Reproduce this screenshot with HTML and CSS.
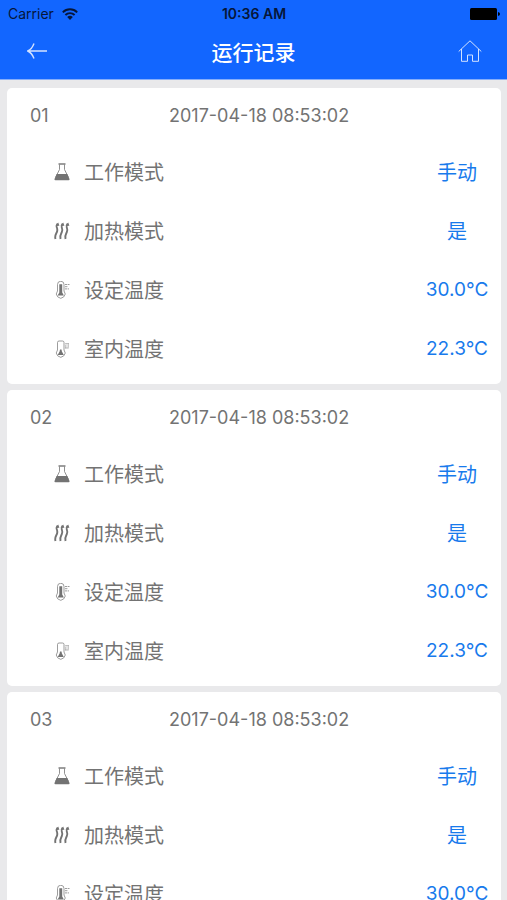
FILE: index.html
```
<!DOCTYPE html>
<html lang="zh-CN">
<head>
<meta charset="utf-8">
<meta name="viewport" content="width=device-width, initial-scale=1">
<title>运行记录</title>
<link rel="stylesheet" href="styles.css">
</head>
<body>
<svg class="symbols" aria-hidden="true">
  <symbol id="flask" viewBox="0 0 16 18">
    <path d="M4.500 1h7" stroke="currentColor" stroke-width="1.4" fill="none"/>
    <path d="M5.500 1.500v5L1.500 14.500M10.500 1.500v5l4 8" stroke="currentColor" stroke-width=".8" fill="none"/>
    <path d="M2.700 11h10.600l2.200 4.900q.4 1.400-1 1.400H1.500q-1.400 0-1-1.400z" fill="currentColor"/>
  </symbol>
  <symbol id="heat" viewBox="0 0 16 18">
    <g fill="none" stroke="currentColor" stroke-width="1.900">
      <path d="M1.500 17c-1-3 .2-4.500 1.200-6.500s.8-3.500 0-5.500q-.4-1.500 1-3.500"/>
      <path d="M6.500 17c-1-3 .2-4.500 1.200-6.500s.8-3.500 0-5.500q-.4-1.500 1-3.500"/>
      <path d="M11.500 17c-1-3 .2-4.500 1.200-6.500s.8-3.500 0-5.500q-.4-1.500 1-3.500"/>
    </g>
    <path d="M1.500 4 4.200.5l1.200 3.300zM6.500 4 9.200.5l1.200 3.300zM11.500 4 14.200.5l1.200 3.300z" fill="currentColor"/>
  </symbol>
  <symbol id="thermo-set" viewBox="0 0 16 18">
    <path d="M3.500 10V3.500a3.200 3.200 0 0 1 6.500 0V10a4.300 4.300 0 1 1-6.500 0z" fill="none" stroke="currentColor" stroke-width=".7"/>
    <path d="M5.300 3.300h2.900v8.200l1.700 3H3.600l1.700-3z" fill="currentColor"/>
    <path d="M11 3.500h4.500M11 5.700h3M11 7.900h4" stroke="currentColor" stroke-width=".7" stroke-dasharray="2 .6"/>
  </symbol>
  <symbol id="thermo-room" viewBox="0 0 16 18">
    <path d="M3.500 10V2.500q0-1.500 1.500-1.500h3.500Q10 1 10 2.500V10a4.300 4.300 0 1 1-6.500 0z" fill="none" stroke="currentColor" stroke-width=".7"/>
    <path d="M6 9.500h1.500l.4 2 1.900 3.400H3.700l1.900-3.400z" fill="currentColor"/>
    <path d="M11 3.500h4M11.500 4.500v4M13 3.500v5M14.500 3.500v4M11 8h4" stroke="currentColor" stroke-width=".4" fill="none"/>
  </symbol>
</svg>

<header class="top">
  <div class="status">
    <span class="carrier">Carrier
      <svg class="wifi" viewBox="0 0 16 12" aria-hidden="true">
        <g fill="none" stroke="currentColor" stroke-width="1.900">
          <path d="M.8 4.300a10.200 10.200 0 0 1 14.400 0"/>
          <path d="M3.400 7a6.500 6.500 0 0 1 9.200 0"/>
        </g>
        <path d="M8 12 5.200 9.100a4 4 0 0 1 5.600 0z" fill="currentColor"/>
      </svg>
    </span>
    <span class="clock">10:36 AM</span>
    <svg class="battery" viewBox="0 0 30 12" aria-hidden="true">
      <rect width="27" height="12" rx="1.500"/>
      <path d="M28 4q2 .3 2 2t-2 2z"/>
    </svg>
  </div>
  <nav class="bar">
    <button class="icon-button" type="button" aria-label="返回">
      <svg class="back" viewBox="0 0 20 18" aria-hidden="true"><path d="M20 9H1M7 1.500Q5 7 .8 9q4.200 2 6.200 7.500"/></svg>
    </button>
    <h1 class="title">运行记录</h1>
    <a class="icon-button" href="#" aria-label="首页">
      <svg class="home" viewBox="0 0 24 22" aria-hidden="true"><path d="M.7 11.500 12 .8l11.300 10.700M3.500 9v12.300h6V15h5v6.300h6V9"/></svg>
    </a>
  </nav>
</header>

<main class="records" id="records"></main>

<script src="records.js"></script>
</body>
</html>
```
FILE: styles.css
```
* {
  box-sizing: border-box;
}

body {
  margin: 0;
  height: 100vh;
  display: flex;
  flex-direction: column;
  background: #e9e9eb;
  color: #737373;
  font-family: Inter, "Noto Sans CJK SC", sans-serif;
}

.symbols {
  position: absolute;
  width: 0;
  height: 0;
}

.top {
  flex: none;
  background: #1266ff;
  border-bottom: 1px solid #86aefa;
}

.status {
  display: grid;
  grid-template-columns: 1fr auto 1fr;
  align-items: center;
  height: 27px;
  padding: 0 7px 0 8px;
  color: #06163a;
  font-size: 14px;
}

.carrier {
  display: flex;
  align-items: center;
  gap: 8px;
}

.wifi {
  width: 16px;
  height: 12px;
}

.clock {
  font-weight: 600;
}

.battery {
  justify-self: end;
  width: 30px;
  height: 12px;
  fill: #000;
}

.bar {
  display: flex;
  align-items: center;
  justify-content: space-between;
  height: 52px;
  padding: 0 15px 4px;
}

.icon-button {
  display: flex;
  align-items: center;
  justify-content: center;
  width: 44px;
  height: 44px;
  padding: 0;
  border: 0;
  background: none;
}

.back,
.home {
  fill: none;
  stroke: #d3e2ff;
}

.back {
  width: 20px;
  height: 18px;
  stroke-width: 1.4;
}

.home {
  width: 24px;
  height: 22px;
  stroke-width: 1;
}

.title {
  margin: 0;
  color: #fff;
  font-size: 21px;
  font-weight: 500;
}

.records {
  flex: 1;
  min-height: 0;
  overflow-y: auto;
  scrollbar-width: none;
  display: flex;
  flex-direction: column;
  gap: 6px;
  padding: 8px 6px 8px 7px;
}

.card {
  flex: none;
  padding-bottom: 6px;
  border-radius: 5px;
  background: #fff;
}

.card-head {
  display: grid;
  grid-template-columns: 139px 1fr;
  align-items: center;
  height: 54px;
  padding-left: 23px;
  font-size: 18px;
}

.number {
  margin: 0;
  font-size: 18px;
  font-weight: 400;
}

.fields {
  margin: 0;
}

.field {
  display: flex;
  align-items: center;
  justify-content: space-between;
  height: 59px;
  padding-left: 47px;
  font-size: 20px;
}

.label {
  display: flex;
  align-items: center;
  gap: 14px;
}

.label svg {
  width: 16px;
  height: 18px;
}

.value {
  width: 88px;
  margin: 0;
  color: #187aec;
  text-align: center;
}

.reading {
  font-size: 19px;
}
```
FILE: records.js
```
const fields = [
  ["flask", "工作模式", "手动", "value"],
  ["heat", "加热模式", "是", "value"],
  ["thermo-set", "设定温度", "30.0°C", "value reading"],
  ["thermo-room", "室内温度", "22.3°C", "value reading"],
];

const rows = fields.map(([icon, label, value, style]) => `
  <div class="field">
    <dt class="label"><svg aria-hidden="true"><use href="#${icon}"/></svg>${label}</dt>
    <dd class="${style}">${value}</dd>
  </div>`).join("");

document.getElementById("records").innerHTML = ["01", "02", "03"].map((number) => `
  <article class="card">
    <header class="card-head">
      <h2 class="number">${number}</h2>
      <time datetime="2017-04-18T08:53:02">2017-04-18 08:53:02</time>
    </header>
    <dl class="fields">${rows}</dl>
  </article>`).join("");
```
